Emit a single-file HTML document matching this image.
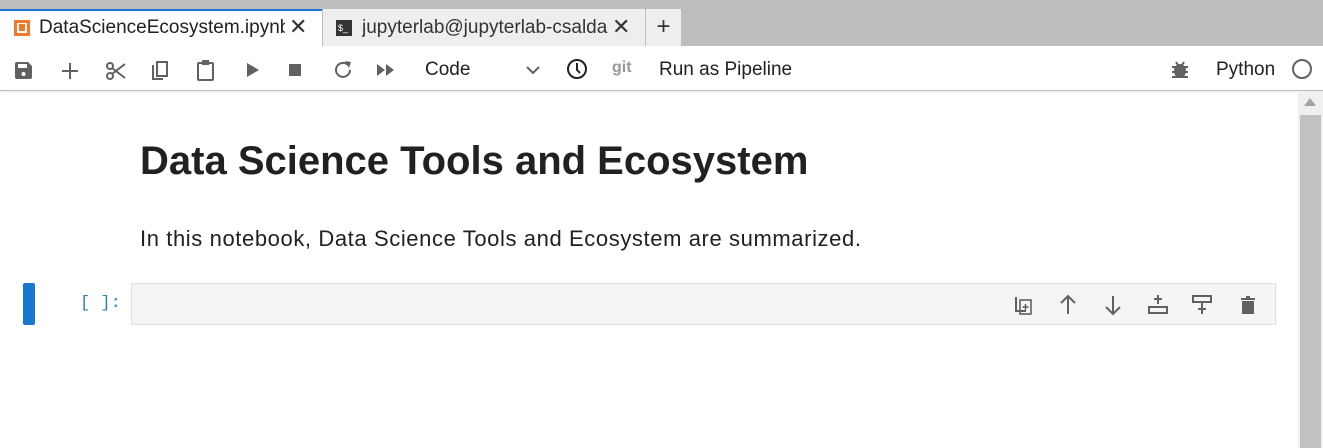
<!DOCTYPE html>
<html><head><style>
*{margin:0;padding:0;box-sizing:border-box}
body{width:1323px;height:448px;overflow:hidden;background:#fff;font-family:"Liberation Sans",sans-serif;color:#212121;position:relative}
.abs{position:absolute}
</style></head><body>
<div class="abs" style="left:0;top:0;width:1323px;height:46px;background:#bdbdbd"></div>
<div class="abs" style="left:0;top:9px;width:322px;height:38px;background:#fff;border-top:2px solid #1976d2"></div>
<div class="abs" style="left:14px;top:20px;width:16px;height:16px;background:#f37726"></div>
<div class="abs" style="left:17px;top:23px;width:10px;height:10px;background:#fff"></div>
<div class="abs" style="left:19px;top:24px;width:6px;height:7px;background:#f37726"></div>
<div class="abs" style="left:39px;top:17px;font-size:19px;color:#212121;width:246px;overflow:hidden;white-space:nowrap">DataScienceEcosystem.ipynb</div>
<div class="abs" style="left:289px;top:14px;font-size:22px;color:#333">✕</div>
<div class="abs" style="left:323px;top:9px;width:322px;height:37px;background:#eeeeee"></div>
<div class="abs" style="left:336px;top:20px;width:16px;height:16px;background:#333;color:#fff;font-size:9px;line-height:16px;padding-left:2px">$_</div>
<div class="abs" style="left:362px;top:17px;font-size:19px;color:#333;width:246px;overflow:hidden;white-space:nowrap">jupyterlab@jupyterlab-csaldana</div>
<div class="abs" style="left:612px;top:14px;font-size:22px;color:#333">✕</div>
<div class="abs" style="left:646px;top:9px;width:35px;height:37px;background:#eeeeee;font-size:24px;text-align:center;line-height:36px;color:#333">+</div>
<div class="abs" style="left:0;top:90px;width:1323px;height:1px;background:#bdbdbd;box-shadow:0 1px 2px rgba(0,0,0,.15)"></div>
<svg class="abs" style="left:0;top:46px" width="1323" height="44" fill="#616161">
<path d="M17 16h11l4 4v11a2 2 0 0 1-2 2H17a2 2 0 0 1-2-2V18a2 2 0 0 1 2-2z"/><rect x="18" y="18" width="9" height="4" fill="#fff"/><circle cx="23.5" cy="28" r="2" fill="#fff"/>
<path d="M70 17v16M62 25h16" stroke="#616161" stroke-width="2"/>
<g stroke="#616161" stroke-width="2" fill="none"><circle cx="110" cy="30" r="3"/><circle cx="110" cy="20" r="3"/><path d="M112 22l13 10M112 28l13-10"/></g>
<g stroke="#616161" stroke-width="2" fill="none"><path d="M153 19v14h10"/><rect x="157" y="16" width="10" height="14"/></g>
<g stroke="#616161" stroke-width="2" fill="none"><rect x="198" y="17" width="15" height="17" rx="1"/></g><rect x="202" y="14" width="7" height="5"/>
<path d="M247 17l12 7-12 7z"/>
<rect x="289" y="18" width="12" height="12"/>
<path d="M348 19a7 7 0 1 0 2 5" stroke="#616161" stroke-width="2" fill="none"/><path d="M345 15l6 1-2 6z"/>
<path d="M377 18l8 6-8 6zM386 18l8 6-8 6z"/>
<path d="M527 21l6 6 6-6" stroke="#616161" stroke-width="2" fill="none"/>
<g stroke="#212121" stroke-width="2" fill="none"><circle cx="577" cy="23" r="9"/><path d="M577 17v7l3 3"/></g>
<g><ellipse cx="1180" cy="25" rx="6" ry="7"/><path d="M1172 21h16M1172 26h16M1172 31h16M1176 16l2 3M1184 16l-2 3" stroke="#616161" stroke-width="2"/></g>
<circle cx="1302" cy="23" r="9" stroke="#616161" stroke-width="2" fill="none"/>
</svg>
<div class="abs" style="left:425px;top:59px;font-size:19px;color:#212121">Code</div>
<div class="abs" style="left:612px;top:59px;font-size:16px;color:#999;font-weight:bold">git</div>
<div class="abs" style="left:659px;top:59px;font-size:19px;color:#212121">Run as Pipeline</div>
<div class="abs" style="left:1216px;top:59px;font-size:19px;color:#212121">Python</div>
<div class="abs" style="left:1298px;top:91px;width:25px;height:357px;background:#f0f0f0"></div>
<div class="abs" style="left:1300px;top:115px;width:21px;height:333px;background:#c1c1c1"></div>
<div class="abs" style="left:1304px;top:98px;width:0;height:0;border-left:6px solid transparent;border-right:6px solid transparent;border-bottom:8px solid #a3a3a3"></div>
<div class="abs" style="left:140px;top:139px;font-size:40px;font-weight:bold;color:#212121">Data Science Tools and Ecosystem</div>
<div class="abs" style="left:140px;top:226px;font-size:22px;letter-spacing:0.6px;color:#212121">In this notebook, Data Science Tools and Ecosystem are summarized.</div>
<div class="abs" style="left:23px;top:283px;width:12px;height:42px;background:#1976d2;border-radius:2px"></div>
<div class="abs" style="left:80px;top:294px;font-family:'Liberation Mono',monospace;font-size:17px;color:#307fc1">[ ]:</div>
<div class="abs" style="left:131px;top:283px;width:1145px;height:42px;background:#f5f5f5;border:1px solid #e0e0e0"></div>
<svg class="abs" style="left:1000px;top:283px" width="270" height="42" fill="none" stroke="#616161" stroke-width="2">
<path d="M16 14v14h10"/><rect x="20" y="17" width="11" height="14" stroke-width="1.6"/><path d="M25.5 21v6M22.5 24h6" stroke-width="1.5"/>
<path d="M68 31V13M61 20l7-7 7 7"/>
<path d="M113 13v18M106 24l7 7 7-7"/>
<rect x="149" y="24" width="18" height="6"/><path d="M158 12v9M154 16h8"/>
<rect x="193" y="13" width="18" height="6"/><path d="M202 20v11M198 26h8"/>
<path d="M241 16h14M246 14h4" /><path d="M242 18h12v12a1 1 0 0 1-1 1h-10a1 1 0 0 1-1-1z" fill="#616161" stroke="none"/>
</svg>
</body></html>
